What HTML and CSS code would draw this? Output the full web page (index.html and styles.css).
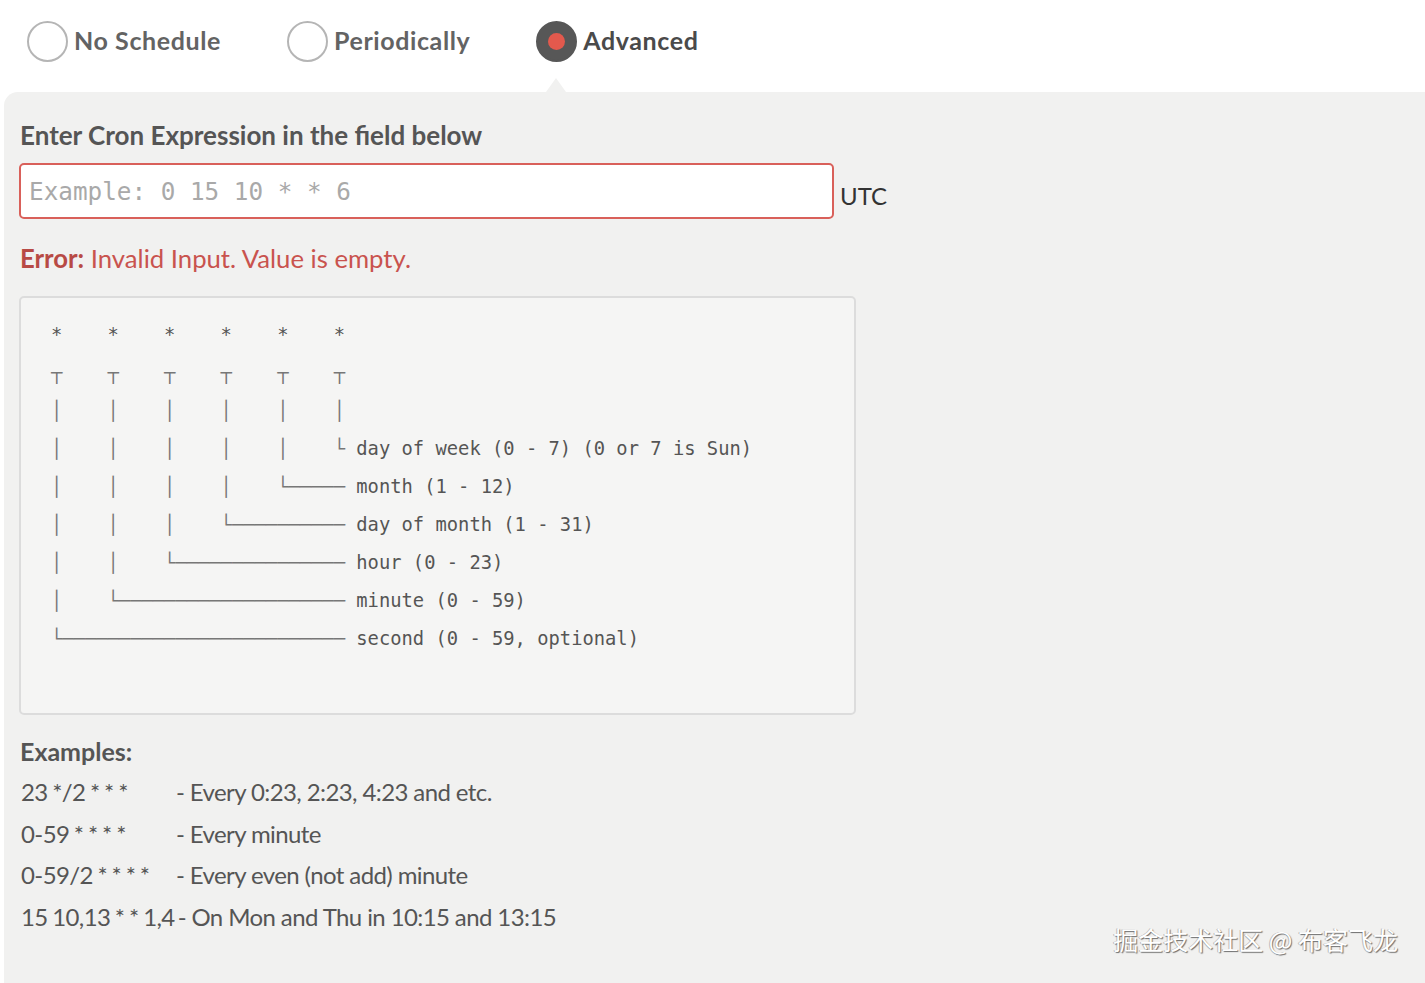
FILE: index.html
```html
<!DOCTYPE html>
<html lang="en">
<head>
<meta charset="utf-8">
<title>Cron Scheduler</title>
<link rel="stylesheet" href="styles.css">
</head>
<body>
<div class="scheduler">
  <div class="modes">
    <label class="mode"><span class="radio"></span><span class="mode-label">No Schedule</span></label>
    <label class="mode"><span class="radio"></span><span class="mode-label">Periodically</span></label>
    <label class="mode active"><span class="radio"><span class="dot"></span></span><span class="mode-label">Advanced</span></label>
  </div>
  <div class="panel">
    <h3 class="title">Enter Cron Expression in the field below</h3>
    <div class="field-row">
      <input class="cron-input" type="text" placeholder="Example: 0 15 10 * * 6">
      <span class="tz">UTC</span>
    </div>
    <p class="error"><strong>Error:</strong> Invalid Input. Value is empty.</p>
<pre class="diagram">*    *    *    *    *    *
<span class="ln">┬    ┬    ┬    ┬    ┬    ┬</span>
<span class="ln">│    │    │    │    │    │</span>
<span class="ln">│    │    │    │    │    └</span> day of week (0 - 7) (0 or 7 is Sun)
<span class="ln">│    │    │    │    └─────</span> month (1 - 12)
<span class="ln">│    │    │    └──────────</span> day of month (1 - 31)
<span class="ln">│    │    └───────────────</span> hour (0 - 23)
<span class="ln">│    └────────────────────</span> minute (0 - 59)
<span class="ln">└─────────────────────────</span> second (0 - 59, optional)</pre>
    <h4 class="examples-title">Examples:</h4>
    <ul class="examples">
      <li><span class="expr">23 */2 * * *</span>- Every 0:23, 2:23, 4:23 and etc.</li>
      <li><span class="expr">0-59 * * * *</span>- Every minute</li>
      <li><span class="expr">0-59/2 * * * *</span>- Every even (not add) minute</li>
      <li><span class="expr">15 10,13 * * 1,4</span>- On Mon and Thu in 10:15 and 13:15</li>
    </ul>
    <div class="watermark">掘金技术社区 @ 布客飞龙</div>
  </div>
</div>
</body>
</html>
```

FILE: styles.css
```css
* { box-sizing: border-box; }

html, body {
  margin: 0;
  padding: 0;
  background: #ffffff;
}

body {
  font-family: "Lato", "Noto Sans", sans-serif;
  color: #555555;
  height: 983px;
  overflow: hidden;
}

.scheduler {
  display: flex;
  flex-direction: column;
  height: 100%;
}

.modes {
  display: flex;
  align-items: flex-start;
  gap: 66px;
  padding: 21px 0 0 27px;
  height: 92px;
}

.mode {
  display: flex;
  align-items: center;
  gap: 6px;
  position: relative;
}

.radio {
  width: 41px;
  height: 41px;
  border-radius: 50%;
  border: 2px solid #b5b5b5;
  background: #ffffff;
  display: flex;
  align-items: center;
  justify-content: center;
}

.mode.active .radio {
  background: #575757;
  border-color: #575757;
}

.dot {
  width: 17px;
  height: 17px;
  border-radius: 50%;
  background: #e3594d;
}

.mode.active::after {
  content: "";
  position: absolute;
  left: 10px;
  top: 57px;
  border-left: 10px solid transparent;
  border-right: 10px solid transparent;
  border-bottom: 14px solid #f1f1f0;
}

.mode-label {
  font-size: 25px;
  font-weight: 700;
  letter-spacing: 0.6px;
  line-height: 30px;
  margin-top: -3px;
  color: #636363;
}

.mode.active .mode-label {
  color: #4a4a4a;
}

.panel {
  flex: 1;
  margin-left: 4px;
  background: #f1f1f0;
  border-top-left-radius: 14px;
  padding: 28px 0 0 16px;
  position: relative;
}

.title {
  margin: 0;
  font-size: 26px;
  line-height: 30px;
  font-weight: 700;
  color: #555555;
}

.field-row {
  display: flex;
  align-items: baseline;
  gap: 6px;
  margin-top: 13px;
}

.cron-input {
  width: 815px;
  height: 56px;
  margin-left: -1px;
  border: 2px solid #d9605a;
  border-radius: 5px;
  background: #ffffff;
  padding: 0 8px;
  font-family: "DejaVu Sans Mono", monospace;
  font-size: 24.3px;
  color: #333333;
  outline: none;
}

.cron-input::placeholder {
  color: #a9a9a9;
}

.tz {
  font-size: 24px;
  color: #333333;
  position: relative;
  top: 5px;
}

.error {
  margin: 25px 0 0 0;
  font-size: 25.7px;
  line-height: 28px;
  height: 30px;
  color: #c9534e;
}

.error strong {
  font-weight: 700;
  color: #b84a45;
}

.diagram {
  margin: 22px 0 0 -1px;
  width: 837px;
  padding: 18px 30px 55px 30px;
  background: #f5f5f4;
  border: 2px solid #dcdcdc;
  border-radius: 5px;
  font-family: "DejaVu Sans Mono", monospace;
  font-size: 18.8px;
  line-height: 38px;
  color: #555555;
}

.diagram .ln {
  color: #777777;
}

.examples-title {
  margin: 22px 0 0 0;
  font-size: 25px;
  line-height: 28px;
  height: 30px;
  font-weight: 700;
  color: #555555;
}

.examples {
  list-style: none;
  margin: 4px 0 0 1px;
  padding: 0;
  font-size: 24px;
  letter-spacing: -0.6px;
  line-height: 41.7px;
  color: #555555;
}

.expr {
  display: inline-block;
  min-width: 155px;
  word-spacing: -1px;
  padding-right: 3px;
}

.watermark {
  position: absolute;
  right: 27px;
  bottom: 26px;
  font-family: "Noto Sans CJK SC", sans-serif;
  font-size: 25px;
  color: #ffffff;
  text-shadow: 1px 1px 1px #6d6d6d, -1px 0 0 #bbbbbb;
}
```
